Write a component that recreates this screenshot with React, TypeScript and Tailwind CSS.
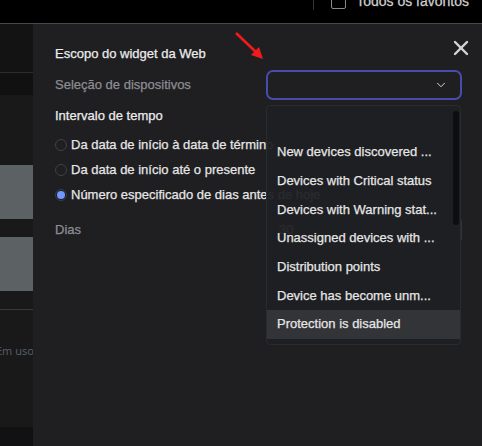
import { ChevronDown, X } from "lucide-react";

const options = [
  "",
  "New devices discovered ...",
  "Devices with Critical status",
  "Devices with Warning stat...",
  "Unassigned devices with ...",
  "Distribution points",
  "Device has become unm...",
  "Protection is disabled",
];

const radios = [
  { label: "Da data de início à data de término", checked: false },
  { label: "Da data de início até o presente", checked: false },
  { label: "Número especificado de dias antes de hoje", checked: true },
];

const App = () => {
  return (
    <div
      className="w-[482px] h-[446px] bg-black overflow-hidden flex flex-col text-[13px] [-webkit-text-stroke:0.25px_currentColor]"
      style={{ fontFamily: '"Liberation Sans", Arial, sans-serif' }}
    >
      {/* top bar */}
      <div className="h-[23px] flex justify-end items-start pr-[13px] overflow-hidden shrink-0">
        <div className="w-px h-[10px] bg-[#333333] mr-[17px]" />
        <div className="w-[15px] h-[15px] -mt-[6px] border-[1.5px] border-[#8a8a8a] rounded-[2px] mr-[10px]" />
        <span className="text-[#cfcfcf] text-[14px] leading-[16px] -mt-[7px] whitespace-nowrap">Todos os favoritos</span>
      </div>
      <div className="h-px bg-[#474747] shrink-0" />

      <div className="flex flex-1 min-h-0">
        {/* left strip */}
        <div className="w-[33px] flex flex-col bg-[#191919] shrink-0">
          <div className="h-[48px] bg-[#131313]" />
          <div className="h-px bg-[#2c2c2c]" />
          <div className="h-[22px] bg-[#111111]" />
          <div className="h-[70px]" />
          <div className="h-[54px] bg-[#5c6163]" />
          <div className="h-[18px]" />
          <div className="h-[54px] bg-[#5c6163]" />
          <div className="h-[18px]" />
          <div className="h-px bg-[#393939]" />
          <div className="h-[117px] relative overflow-hidden">
            <span
              className="absolute -left-[4px] top-[33px] text-[11px] text-[#58606e] whitespace-nowrap [-webkit-text-stroke:0px]"
              style={{ fontFamily: '"Open Sans", sans-serif' }}
            >
              Em uso
            </span>
          </div>
          <div className="flex-1 bg-[#111113]" />
        </div>

        {/* panel */}
        <div className="flex-1 bg-[#1f1f22] relative pl-[22px] pr-[15px]">
          <div className="flex justify-between items-start pt-[18px]">
            <span className="mt-[4px] leading-[16px] text-[#ececec]">Escopo do widget da Web</span>
            <X size={24} strokeWidth={2.4} className="text-[#d4d4d4] -mr-[6px] -mt-[6px]" />
          </div>

          <div className="flex items-center justify-between mt-[8px] pr-[5px]">
            <span className="text-[#8d8d92]">Seleção de dispositivos</span>
            <div className="w-[196px] h-[30px] border-2 border-[#474cab] rounded-[7px] flex items-center justify-end pr-[12px]">
              <ChevronDown size={14} strokeWidth={1.6} className="text-[#e0e0e0]" />
            </div>
          </div>

          <div className="mt-[8px] leading-[16px] text-[#ececec]">Intervalo de tempo</div>

          <div className="mt-[8px] flex flex-col">
            {radios.map((r) => (
              <div key={r.label} className="h-[25px] flex items-center whitespace-nowrap">
                <span
                  className={
                    r.checked
                      ? "w-[12px] h-[12px] rounded-full border border-[#3b3c42] flex items-center justify-center mr-[4px] shrink-0"
                      : "w-[12px] h-[12px] rounded-full border border-[#414146] mr-[4px] shrink-0"
                  }
                >
                  {r.checked && <span className="w-[8px] h-[8px] rounded-full bg-[#6f97ff]" />}
                </span>
                <span className="text-[#e6e6e6]">{r.label}</span>
              </div>
            ))}
          </div>

          <div className="mt-[10px] h-[26px] flex items-center justify-between pr-[5px]">
            <span className="text-[#8d8d92]">Dias</span>
            <div className="w-[196px] h-[26px] border border-[#34353a] rounded-[5px] flex items-center pl-[12px] text-[#e6e6e6]">
              30
            </div>
          </div>

          {/* annotation arrow */}
          <svg className="absolute left-[201px] top-[7px]" width="32" height="32" viewBox="0 0 32 32">
            <line x1="2" y1="2" x2="24" y2="23" stroke="#ee1c1c" strokeWidth="2.6" />
            <polygon points="29,28 17,24 25,16" fill="#ee1c1c" />
          </svg>

          {/* dropdown list */}
          <div className="absolute left-[233px] top-[81px] w-[195px] h-[240px] bg-[#1f2023]/95 border border-[#2a2b2f] rounded-[4px] pt-[3px] overflow-hidden">
            {options.map((o, i) => (
              <div
                key={i}
                className={
                  i === options.length - 1
                    ? "h-[28.7px] flex items-center pl-[10px] text-[#e6e6e6] bg-[#333437]"
                    : "h-[28.7px] flex items-center pl-[10px] text-[#e6e6e6]"
                }
              >
                {o}
              </div>
            ))}
            <div className="absolute right-[1px] top-[5px] w-[6px] h-[114px] rounded-[3px] bg-[#0e0e10]" />
          </div>
        </div>
      </div>
    </div>
  );
};

export default App;
